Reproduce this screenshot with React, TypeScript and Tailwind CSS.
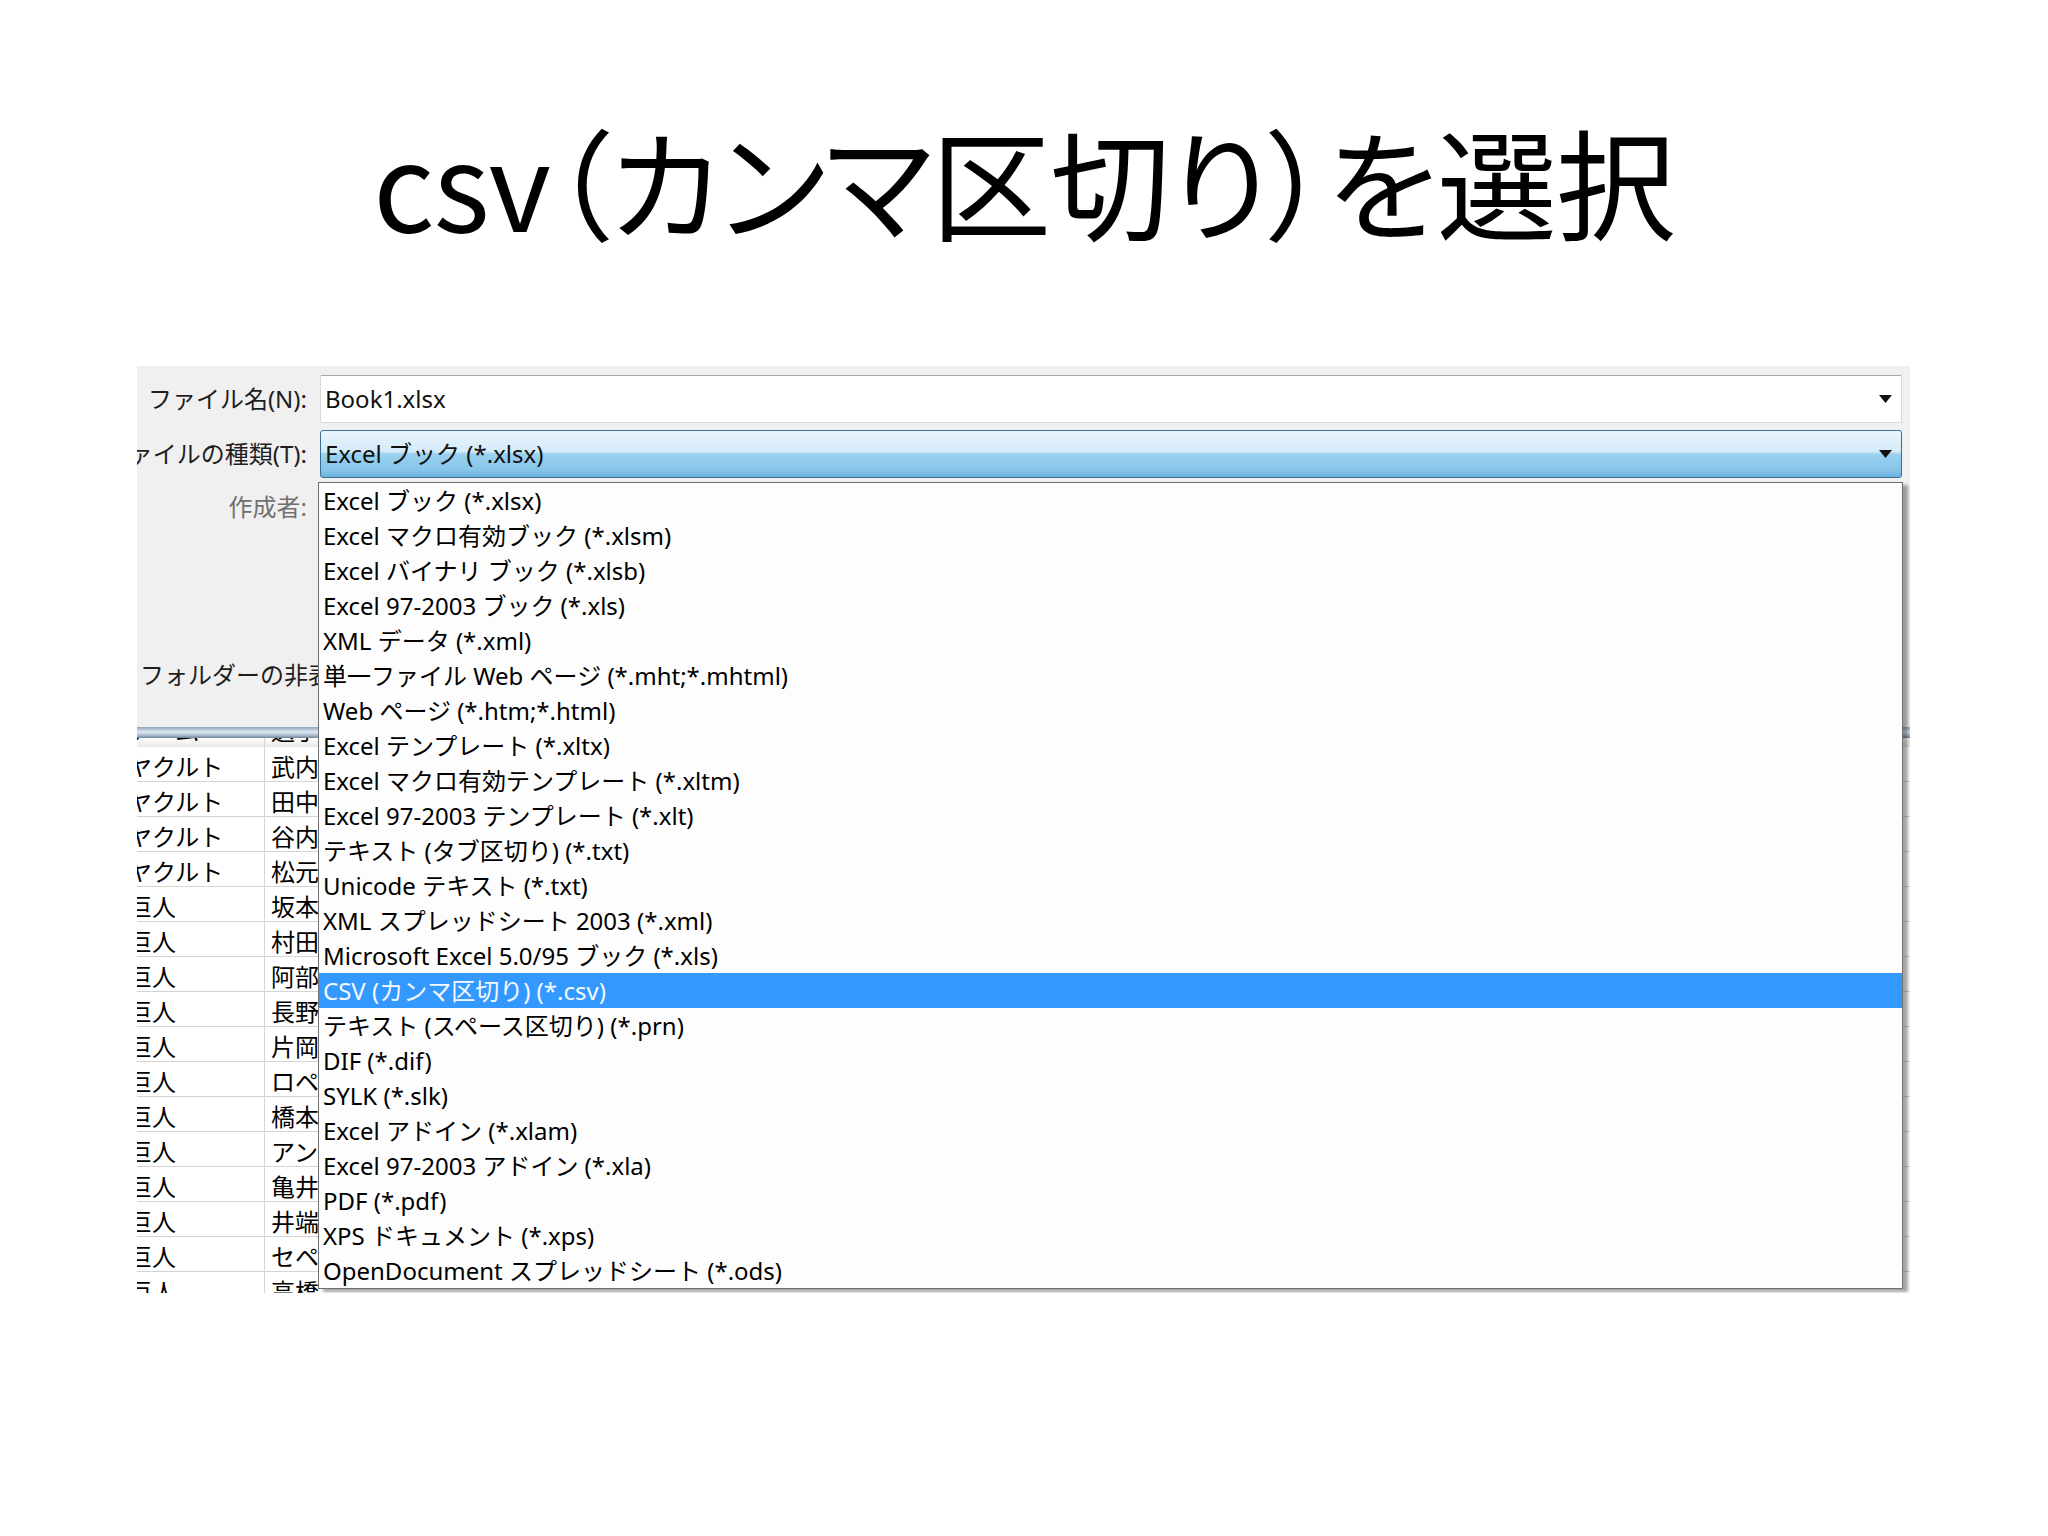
import React from 'react';

const fileTypes = [
  'Excel ブック (*.xlsx)',
  'Excel マクロ有効ブック (*.xlsm)',
  'Excel バイナリ ブック (*.xlsb)',
  'Excel 97-2003 ブック (*.xls)',
  'XML データ (*.xml)',
  '単一ファイル Web ページ (*.mht;*.mhtml)',
  'Web ページ (*.htm;*.html)',
  'Excel テンプレート (*.xltx)',
  'Excel マクロ有効テンプレート (*.xltm)',
  'Excel 97-2003 テンプレート (*.xlt)',
  'テキスト (タブ区切り) (*.txt)',
  'Unicode テキスト (*.txt)',
  'XML スプレッドシート 2003 (*.xml)',
  'Microsoft Excel 5.0/95 ブック (*.xls)',
  'CSV (カンマ区切り) (*.csv)',
  'テキスト (スペース区切り) (*.prn)',
  'DIF (*.dif)',
  'SYLK (*.slk)',
  'Excel アドイン (*.xlam)',
  'Excel 97-2003 アドイン (*.xla)',
  'PDF (*.pdf)',
  'XPS ドキュメント (*.xps)',
  'OpenDocument スプレッドシート (*.ods)',
];

const rows: [string, string][] = [
  ['ヤクルト', '武内'],
  ['ヤクルト', '田中'],
  ['ヤクルト', '谷内'],
  ['ヤクルト', '松元'],
  ['巨人', '坂本'],
  ['巨人', '村田'],
  ['巨人', '阿部'],
  ['巨人', '長野'],
  ['巨人', '片岡'],
  ['巨人', 'ロペス'],
  ['巨人', '橋本'],
  ['巨人', 'アンダーソン'],
  ['巨人', '亀井'],
  ['巨人', '井端'],
  ['巨人', 'セペダ'],
  ['巨人', '高橋'],
];

const Arrow = () => (
  <svg width="13" height="8" viewBox="0 0 13 8" className="shrink-0">
    <polygon points="0,0 13,0 6.5,8" fill="#111" />
  </svg>
);

export default function App() {
  return (
    <div className="w-[2048px] h-[1536px] bg-white font-['Noto_Sans','Noto_Sans_CJK_JP',sans-serif]">
      {/* slide title */}
      <div className="h-[366px] flex items-center justify-center pb-[6px]">
        <h1 className="text-[120px] leading-none text-black font-['Noto_Sans_CJK_JP',sans-serif] [font-feature-settings:'palt'] tracking-[-1px]">
          csv（カンマ区切り）を選択
        </h1>
      </div>

      {/* screenshot of the save dialog */}
      <div className="ml-[137px] w-[1773px] h-[927px] relative overflow-hidden bg-[#f0f0f0]">
        <div className="h-[361px] flex flex-col pt-[9px] pr-[8px] text-[24px] text-[#1e1e1e]">
          <div className="flex items-center h-[48px]">
            <div className="w-[170px] shrink-0 flex justify-end whitespace-nowrap">ファイル名(N):</div>
            <div className="ml-[13px] flex-1 h-full bg-white border border-[#d9d9d9] border-t-[#a8a8a8] rounded-[2px] flex items-center justify-between pl-[4px] pr-[9px]">
              <span className="text-[#111]">Book1.xlsx</span>
              <Arrow />
            </div>
          </div>
          <div className="flex items-center h-[48px] mt-[7px]">
            <div className="w-[170px] shrink-0 flex justify-end whitespace-nowrap">ファイルの種類(T):</div>
            <div className="ml-[13px] flex-1 h-full border border-[#3c6f98] rounded-[3px] flex items-center justify-between pl-[4px] pr-[9px] bg-[linear-gradient(to_bottom,#eaf4fc_0%,#d3ebf8_45%,#9bd1ef_50%,#86c5ea_85%,#6bb1dc_100%)]">
              <span className="text-[#111]">Excel ブック (*.xlsx)</span>
              <Arrow />
            </div>
          </div>
          <div className="flex items-center h-[34px] mt-[12px]">
            <div className="w-[170px] shrink-0 flex justify-end whitespace-nowrap text-[#707070]">作成者:</div>
          </div>
          <div className="flex items-center h-[34px] mt-[134px] pl-[3px] whitespace-nowrap">
            フォルダーの非表示
          </div>
        </div>

        {/* spreadsheet behind the dialog */}
        <div className="h-[11px] bg-[linear-gradient(to_bottom,#8fa6bd_0%,#dde7f1_45%,#b7c7d8_70%,#6f859c_100%)]" />
        <div className="h-[9px] overflow-hidden bg-[linear-gradient(to_bottom,#ffffff,#e8e8e8)] flex text-[24px] text-black font-['Noto_Sans_CJK_JP',sans-serif]">
          <div className="w-[136px] shrink-0 -mt-[26px] -ml-[9px]">チーム</div>
          <div className="border-l border-[#d4d4d4] pl-[6px] -mt-[26px]">選手名</div>
        </div>
        <div className="bg-white font-['Noto_Sans_CJK_JP',sans-serif] text-[24px] text-black">
          {rows.map(([team, name], i) => (
            <div key={i} className="h-[35px] flex border-b border-[#d4d4d4]">
              <div className="w-[136px] shrink-0 flex items-center pt-[4px] -ml-[9px] whitespace-nowrap overflow-hidden">
                {team}
              </div>
              <div className="w-[150px] border-l border-[#d4d4d4] flex items-center pt-[4px] pl-[6px] whitespace-nowrap">
                {name}
              </div>
            </div>
          ))}
        </div>

        {/* open drop-down list */}
        <div className="absolute left-[181px] top-[116px] w-[1585px] bg-[#fdfdfd] border border-[#6f6f6f] shadow-[5px_3px_3px_rgba(0,0,0,0.35)] text-[24px] text-black">
          {fileTypes.map((t, i) => (
            <div
              key={t}
              className={
                i === 14
                  ? 'h-[35px] flex items-center pl-[4px] whitespace-nowrap bg-[#3399ff] text-[#f4f8ff]'
                  : 'h-[35px] flex items-center pl-[4px] whitespace-nowrap'
              }
            >
              {t}
            </div>
          ))}
        </div>
      </div>
    </div>
  );
}
